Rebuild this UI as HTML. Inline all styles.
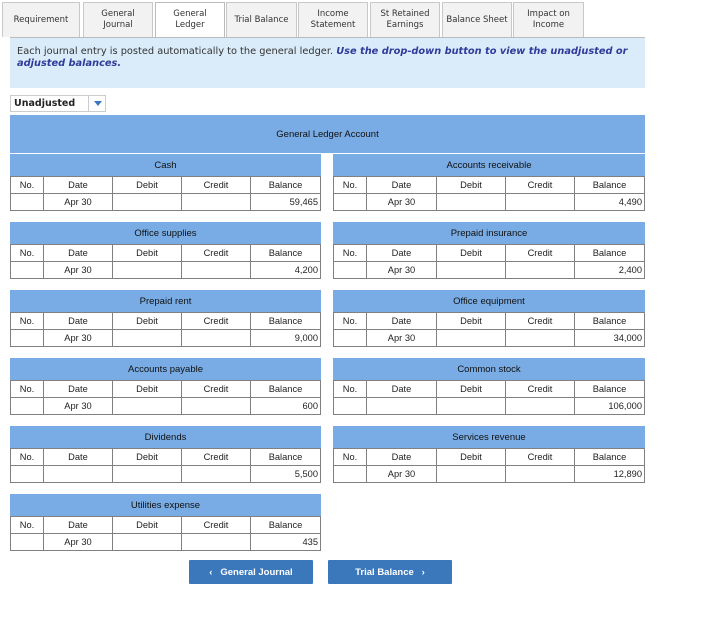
<!DOCTYPE html>
<html><head><meta charset="utf-8"><style>
*{box-sizing:border-box;margin:0;padding:0}
body{width:708px;height:617px;background:#fff;font-family:"Liberation Sans",Arial,sans-serif;position:relative;overflow:hidden;color:#222}
.tab{position:absolute;top:2px;height:35px;background:#f2f2f2;border:1px solid #c8c8c8;border-bottom:none;font-family:"DejaVu Sans",Verdana,sans-serif;font-size:8.5px;display:flex;align-items:center;justify-content:center;text-align:center;line-height:11px;color:#333}
.tab.act{background:#fff;border-color:#bbb}
.info{position:absolute;left:10px;top:37px;width:635px;height:51px;background:#daecfa;border-top:1px solid #bbb;font-family:"DejaVu Sans",Verdana,sans-serif;font-size:9.8px;padding:8px 7px;line-height:12px;color:#333}
.info i{color:#2f3b9a;font-weight:bold}
.dd{position:absolute;left:10px;top:95px;width:96px;height:17px;border:1px solid #ccc;font-family:"DejaVu Sans",Verdana,sans-serif;font-weight:bold;font-size:9.5px;padding:2px 3px;color:#222}
.dd span{position:absolute;left:77px;top:0;width:18px;height:15px;border-left:1px solid #ccc}
.dd span:after{content:"";position:absolute;left:5px;top:5px;border-left:4px solid transparent;border-right:4px solid transparent;border-top:5px solid #3a78c0}
.hdr{position:absolute;left:10px;top:115px;width:635px;height:38px;background:#79ace4;font-size:9.5px;display:flex;align-items:center;justify-content:center;color:#111}
.blk{position:absolute;width:312px}
.t{height:23px;background:#79ace4;font-size:9.5px;display:flex;align-items:center;justify-content:center;color:#111;border-top:1px solid #fff}
table{border-collapse:collapse;width:100%;font-size:9.3px;table-layout:fixed}
td{border:1px solid #808080;height:17px;text-align:center;padding:0 2px;color:#222}
td.r{text-align:right}
.btn{position:absolute;top:560px;width:124px;height:24px;background:#3b78bb;color:#fff;font-weight:bold;font-size:9.5px;display:flex;align-items:center;justify-content:center;border-radius:1px}
</style></head><body>
<div class="tab" style="left:2px;width:78px">Requirement</div>
<div class="tab" style="left:83px;width:70px">General<br>Journal</div>
<div class="tab act" style="left:155px;width:70px">General<br>Ledger</div>
<div class="tab" style="left:226px;width:71px">Trial Balance</div>
<div class="tab" style="left:298px;width:70px">Income<br>Statement</div>
<div class="tab" style="left:370px;width:70px">St Retained<br>Earnings</div>
<div class="tab" style="left:442px;width:70px">Balance Sheet</div>
<div class="tab" style="left:513px;width:71px">Impact on<br>Income</div>
<div class="info">Each journal entry is posted automatically to the general ledger. <i>Use the drop-down button to view the unadjusted or adjusted balances.</i></div>
<div class="dd">Unadjusted<span></span></div>
<div class="hdr">General Ledger Account</div>

<div class="blk" style="left:10px;top:153px;width:311px"><div class="t">Cash</div><table><colgroup><col style="width:33px"><col style="width:69px"><col style="width:69px"><col style="width:69px"><col></colgroup><tr><td>No.</td><td>Date</td><td>Debit</td><td>Credit</td><td>Balance</td></tr><tr><td></td><td>Apr 30</td><td></td><td></td><td class="r">59,465</td></tr></table></div>
<div class="blk" style="left:333px;top:153px"><div class="t">Accounts receivable</div><table><colgroup><col style="width:33px"><col style="width:70px"><col style="width:69px"><col style="width:69px"><col></colgroup><tr><td>No.</td><td>Date</td><td>Debit</td><td>Credit</td><td>Balance</td></tr><tr><td></td><td>Apr 30</td><td></td><td></td><td class="r">4,490</td></tr></table></div>

<div class="blk" style="left:10px;top:221px;width:311px"><div class="t">Office supplies</div><table><colgroup><col style="width:33px"><col style="width:69px"><col style="width:69px"><col style="width:69px"><col></colgroup><tr><td>No.</td><td>Date</td><td>Debit</td><td>Credit</td><td>Balance</td></tr><tr><td></td><td>Apr 30</td><td></td><td></td><td class="r">4,200</td></tr></table></div>
<div class="blk" style="left:333px;top:221px"><div class="t">Prepaid insurance</div><table><colgroup><col style="width:33px"><col style="width:70px"><col style="width:69px"><col style="width:69px"><col></colgroup><tr><td>No.</td><td>Date</td><td>Debit</td><td>Credit</td><td>Balance</td></tr><tr><td></td><td>Apr 30</td><td></td><td></td><td class="r">2,400</td></tr></table></div>

<div class="blk" style="left:10px;top:289px;width:311px"><div class="t">Prepaid rent</div><table><colgroup><col style="width:33px"><col style="width:69px"><col style="width:69px"><col style="width:69px"><col></colgroup><tr><td>No.</td><td>Date</td><td>Debit</td><td>Credit</td><td>Balance</td></tr><tr><td></td><td>Apr 30</td><td></td><td></td><td class="r">9,000</td></tr></table></div>
<div class="blk" style="left:333px;top:289px"><div class="t">Office equipment</div><table><colgroup><col style="width:33px"><col style="width:70px"><col style="width:69px"><col style="width:69px"><col></colgroup><tr><td>No.</td><td>Date</td><td>Debit</td><td>Credit</td><td>Balance</td></tr><tr><td></td><td>Apr 30</td><td></td><td></td><td class="r">34,000</td></tr></table></div>

<div class="blk" style="left:10px;top:357px;width:311px"><div class="t">Accounts payable</div><table><colgroup><col style="width:33px"><col style="width:69px"><col style="width:69px"><col style="width:69px"><col></colgroup><tr><td>No.</td><td>Date</td><td>Debit</td><td>Credit</td><td>Balance</td></tr><tr><td></td><td>Apr 30</td><td></td><td></td><td class="r">600</td></tr></table></div>
<div class="blk" style="left:333px;top:357px"><div class="t">Common stock</div><table><colgroup><col style="width:33px"><col style="width:70px"><col style="width:69px"><col style="width:69px"><col></colgroup><tr><td>No.</td><td>Date</td><td>Debit</td><td>Credit</td><td>Balance</td></tr><tr><td></td><td></td><td></td><td></td><td class="r">106,000</td></tr></table></div>

<div class="blk" style="left:10px;top:425px;width:311px"><div class="t">Dividends</div><table><colgroup><col style="width:33px"><col style="width:69px"><col style="width:69px"><col style="width:69px"><col></colgroup><tr><td>No.</td><td>Date</td><td>Debit</td><td>Credit</td><td>Balance</td></tr><tr><td></td><td></td><td></td><td></td><td class="r">5,500</td></tr></table></div>
<div class="blk" style="left:333px;top:425px"><div class="t">Services revenue</div><table><colgroup><col style="width:33px"><col style="width:70px"><col style="width:69px"><col style="width:69px"><col></colgroup><tr><td>No.</td><td>Date</td><td>Debit</td><td>Credit</td><td>Balance</td></tr><tr><td></td><td>Apr 30</td><td></td><td></td><td class="r">12,890</td></tr></table></div>

<div class="blk" style="left:10px;top:493px;width:311px"><div class="t">Utilities expense</div><table><colgroup><col style="width:33px"><col style="width:69px"><col style="width:69px"><col style="width:69px"><col></colgroup><tr><td>No.</td><td>Date</td><td>Debit</td><td>Credit</td><td>Balance</td></tr><tr><td></td><td>Apr 30</td><td></td><td></td><td class="r">435</td></tr></table></div>

<div class="btn" style="left:189px">&#8249;&nbsp;&nbsp;&nbsp;General Journal</div>
<div class="btn" style="left:328px">Trial Balance&nbsp;&nbsp;&nbsp;&#8250;</div>
</body></html>
